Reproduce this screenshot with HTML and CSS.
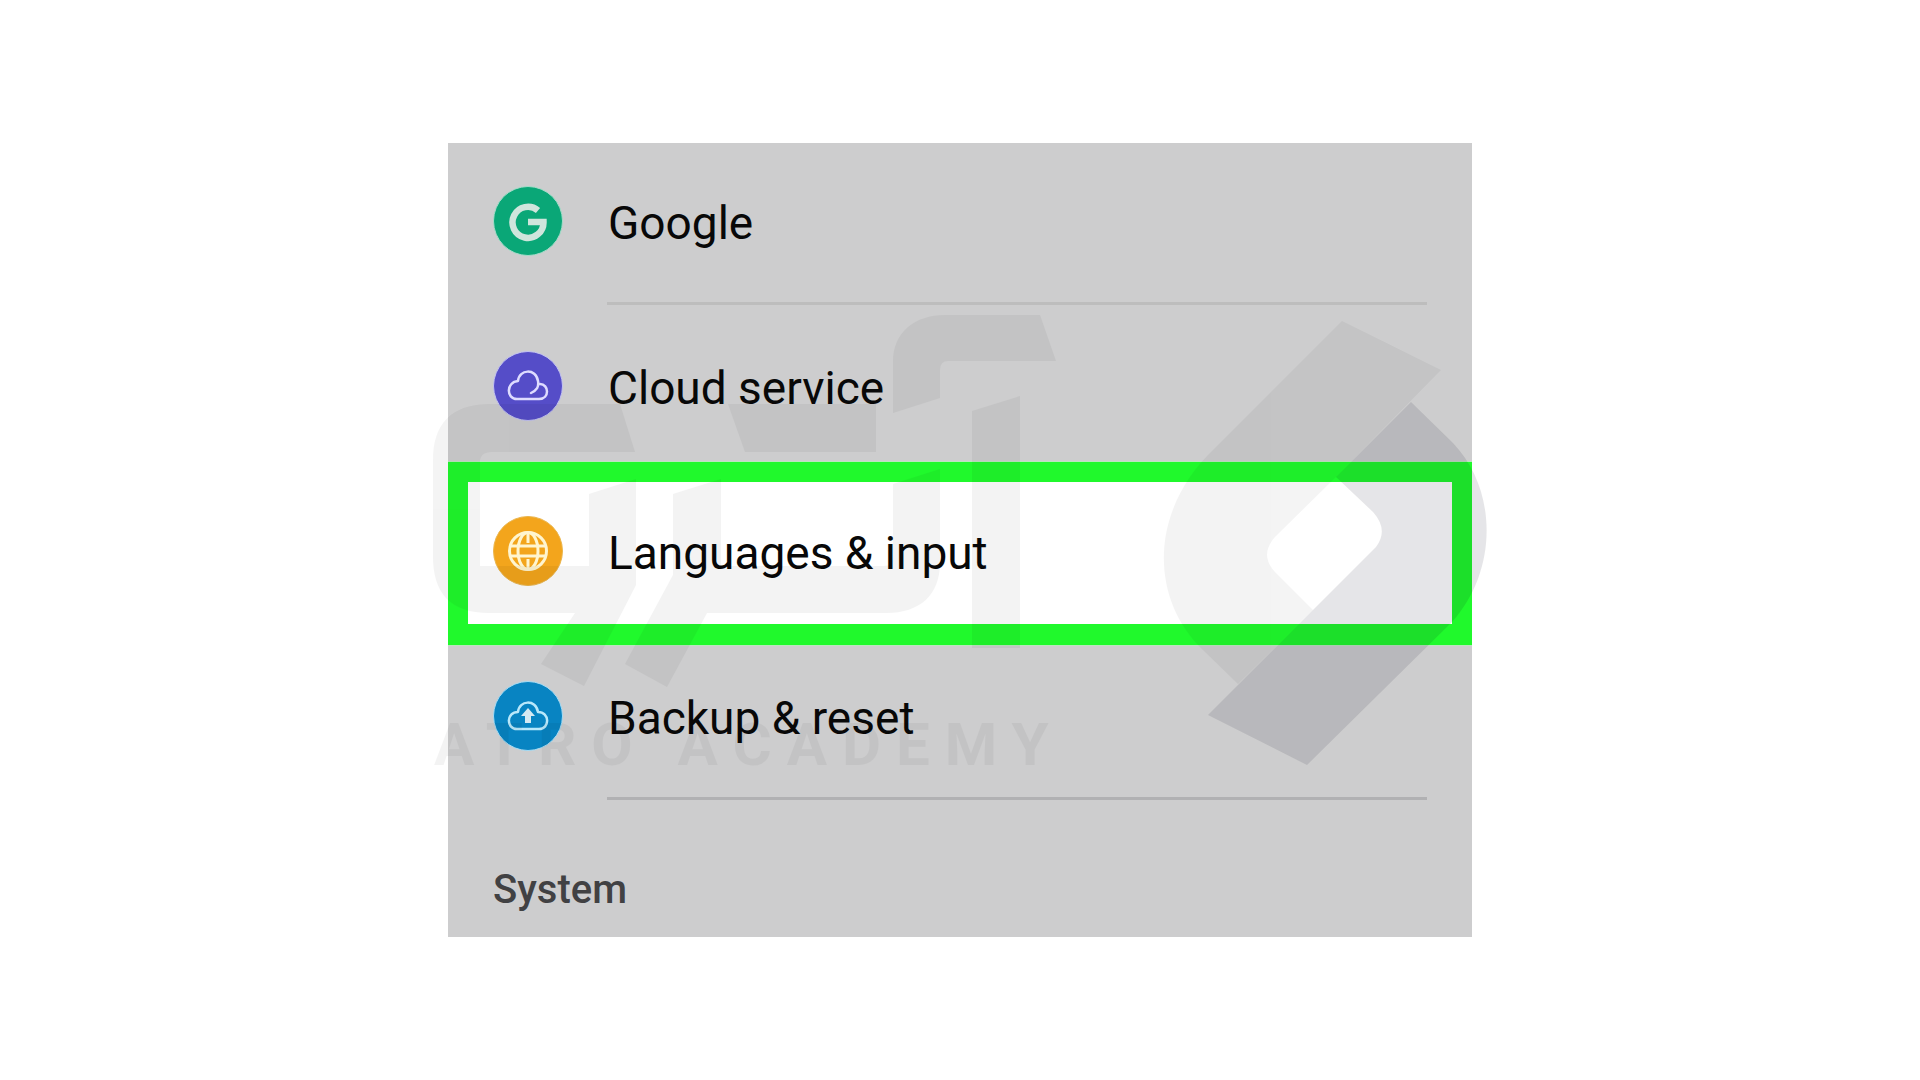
FILE: index.html
```
<!DOCTYPE html>
<html lang="en">
<head>
  <meta charset="UTF-8">
  <meta name="viewport" content="width=device-width, initial-scale=1.0">
  <title>Settings</title>
  <link rel="stylesheet" href="styles.css">
</head>
<body>

<main class="panel">
  <ul class="settings">
    <li class="item first divided">
      <a class="row" href="#google">
        <svg class="icon" viewBox="0 0 70 70" aria-hidden="true">
          <circle cx="35" cy="35" r="34.500" fill="#0aa777" stroke="#a5dcc9"/>
          <path d="M45 24.500A15.500 15.500 0 1 0 50.500 36H35" fill="none" stroke="#cfe5dc" stroke-width="6.500"/>
        </svg>
        <span class="label">Google</span>
      </a>
    </li>
    <li class="item cloud">
      <a class="row" href="#cloud">
        <svg class="icon" viewBox="0 0 70 70" aria-hidden="true">
          <circle cx="35" cy="35" r="34.500" fill="#554dc8" stroke="#c3c3f2"/>
          <path d="M38 42C44 39 46 36 45 30C43 17 26 18 25 30C13 31 13 48 24 48H46C57 48 56 33 47 33" fill="none" stroke="#dedcff" stroke-width="2.500" stroke-linecap="round" stroke-linejoin="round"/>
        </svg>
        <span class="label">Cloud service</span>
      </a>
    </li>
    <li class="item highlight">
      <a class="row" href="#languages">
        <svg class="icon" viewBox="0 0 70 70" aria-hidden="true">
          <circle cx="35" cy="35" r="34.500" fill="#f3a51c" stroke="#eab54d"/>
          <g fill="none" stroke="#fff5cf" stroke-width="3">
            <circle cx="35" cy="35" r="18.500"/>
            <ellipse cx="35" cy="35" rx="10" ry="18.500"/>
            <path d="M35 16v11M35 43v11M18 30h34M18 40h34"/>
          </g>
        </svg>
        <span class="label">Languages &amp; input</span>
      </a>
    </li>
    <li class="item backup divided">
      <a class="row" href="#backup">
        <svg class="icon" viewBox="0 0 70 70" aria-hidden="true">
          <circle cx="35" cy="35" r="34.500" fill="#0884c2" stroke="#a6dcf5"/>
          <path d="M25 31C26 19 43 18 45 31C57 31 57 48 46 48H24C13 48 13 31 25 31Z" fill="none" stroke="#b9e8fb" stroke-width="2.500" stroke-linejoin="round"/>
          <path d="M35 27l7 8h-4v7h-6v-7h-4z" fill="#d5e9f2"/>
        </svg>
        <span class="label">Backup &amp; reset</span>
      </a>
    </li>
  </ul>
  <h2 class="section">System</h2>

  <svg class="watermark" viewBox="432 314 1056 452">
    <g class="mark">
      <path d="M620 404H490C450 404 433 425 433 460V556C433 593 450 613 490 613H575L541 664L584 686L636 585V479L589 494V566H480V462Q480 452 492 452H635Z"/>
      <path d="M673 494L721 479V566H884Q893 566 893 556V484L940 469V562C940 595 920 613 886 613H707L667 687L625 664L673 575Z"/>
      <path d="M728 404H876V452H745Z"/>
      <path d="M893 413V362C893 332 915 315 945 315H1040L1056 361H948Q940 361 940 370V398Z"/>
      <path d="M972 411L1020 396V648H972Z"/>
      <path d="M1342 321L1441 370L1336 477L1275 537Q1259 555 1275 572L1313 610L1238 684L1203 650C1149 598 1149 510 1215 448Z"/>
      <text x="434" y="765">ATRO ACADEMY</text>
    </g>
    <path class="mark-dark" d="M1411 402L1453 443C1498 490 1498 571 1452 622L1307 765L1208 715L1376 547Q1389 530 1373 512L1336 477Z"/>
  </svg>
</main>

</body>
</html>
```
FILE: styles.css
```
* {
  box-sizing: border-box;
}

body {
  font-family: Roboto, 'Liberation Sans', sans-serif;
  background-color: #fff;
  display: flex;
  justify-content: center;
  align-items: center;
  min-height: 100vh;
  margin: 0;
}

.panel {
  position: relative;
  width: 100%;
  max-width: 1024px;
  background-color: #cdcdce;
}

.settings {
  list-style: none;
  margin: 0;
  padding: 0;
}

.row {
  display: flex;
  align-items: center;
  gap: 45px;
  padding: 0 45px;
  color: #080808;
  text-decoration: none;
}

.icon {
  flex: none;
  width: 70px;
  height: 70px;
}

.label {
  padding-top: 4px;
  font-size: 46px;
  line-height: 66px;
}

.first .row {
  padding-top: 43px;
  padding-bottom: 46px;
}

.cloud .row {
  padding-top: 46px;
  padding-bottom: 41px;
}

.backup .row {
  padding-top: 36px;
  padding-bottom: 46px;
}

.divided::after {
  content: "";
  display: block;
  height: 3px;
  margin: 0 45px 0 159px;
  background-color: #bdbdbd;
}

.backup::after {
  background-color: #b1b1b3;
}

.highlight {
  border: 20px solid #20f92c;
  border-bottom-width: 21px;
  background-color: #fff;
  box-shadow: 0 1px #b9e6bd, 0 -1px #b9e6bd;
}

.highlight .row {
  padding: 34px 25px 38px;
}

.section {
  margin: 0;
  padding: 66px 45px 23px;
  font-size: 40px;
  font-weight: 500;
  line-height: 48px;
  color: #414143;
}

/* logo laid over the whole list */
.watermark {
  position: absolute;
  top: 171px;
  left: -16px;
  width: 1056px;
  height: 452px;
  overflow: visible;
  pointer-events: none;
}

.mark {
  fill: #000;
  opacity: 0.045;
}

.mark text {
  font-size: 60px;
  font-weight: 700;
  letter-spacing: 15px;
}

.mark-dark {
  fill: #00001e;
  opacity: 0.1;
}
```
